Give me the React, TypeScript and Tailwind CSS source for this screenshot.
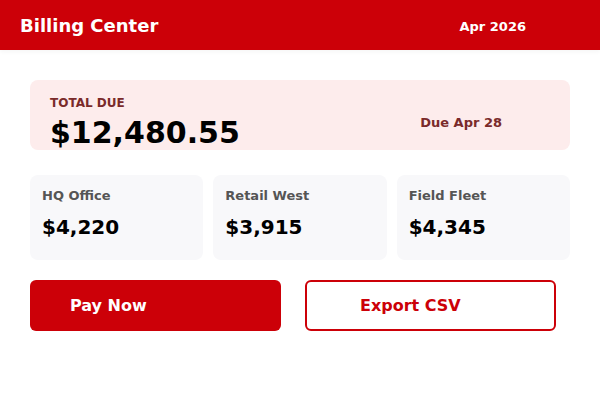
import React from "react";

const font = { fontFamily: '"DejaVu Sans", sans-serif' };

function Stat({ label, value }: { label: string; value: string }) {
  return (
    <div className="h-[85px] rounded-lg bg-[#f8f8fa] pl-3 pt-[13px]">
      <div className="text-[13px] font-bold leading-[16px] text-[#555555]">{label}</div>
      <div className="mt-[11px] text-[20px] font-bold leading-[24px] text-black">{value}</div>
    </div>
  );
}

export default function App() {
  return (
    <div className="w-[600px] h-[400px] bg-white" style={font}>
      <div className="flex h-[50px] items-center justify-between bg-[#cc0008] pl-5 pr-[74px] shadow-[0_2px_4px_rgba(0,0,0,0.04)]">
        <div className="text-[18px] font-bold leading-[21px] text-white">Billing Center</div>
        <div className="mt-[2px] text-[13px] font-bold leading-[15px] text-white">Apr 2026</div>
      </div>
      <div className="px-[30px] pt-[30px]">
        <div className="flex h-[70px] justify-between rounded-lg bg-[#fdecec] pl-5 pr-[68px] pt-4">
          <div>
            <div className="text-[12px] font-bold leading-[14px] text-[#7a2a2a]">TOTAL DUE</div>
            <div className="mt-[5px] text-[30px] font-bold leading-[35px] text-black">$12,480.55</div>
          </div>
          <div className="mt-[19px] text-[13px] font-bold leading-[15px] text-[#7a2a2a]">Due Apr 28</div>
        </div>
        <div className="mt-[25px] grid grid-cols-3 gap-[10px]">
          <Stat label="HQ Office" value="$4,220" />
          <Stat label="Retail West" value="$3,915" />
          <Stat label="Field Fleet" value="$4,345" />
        </div>
        <div className="mt-5 flex gap-6">
          <button className="flex h-[51px] w-[251px] items-center rounded-md bg-[#cc0008] pl-10 text-[16px] font-bold text-white">
            Pay Now
          </button>
          <button className="flex h-[51px] w-[251px] items-center rounded-md border-2 border-[#cc0008] bg-white pl-[53px] text-[16px] font-bold text-[#cc0008]">
            Export CSV
          </button>
        </div>
      </div>
    </div>
  );
}
